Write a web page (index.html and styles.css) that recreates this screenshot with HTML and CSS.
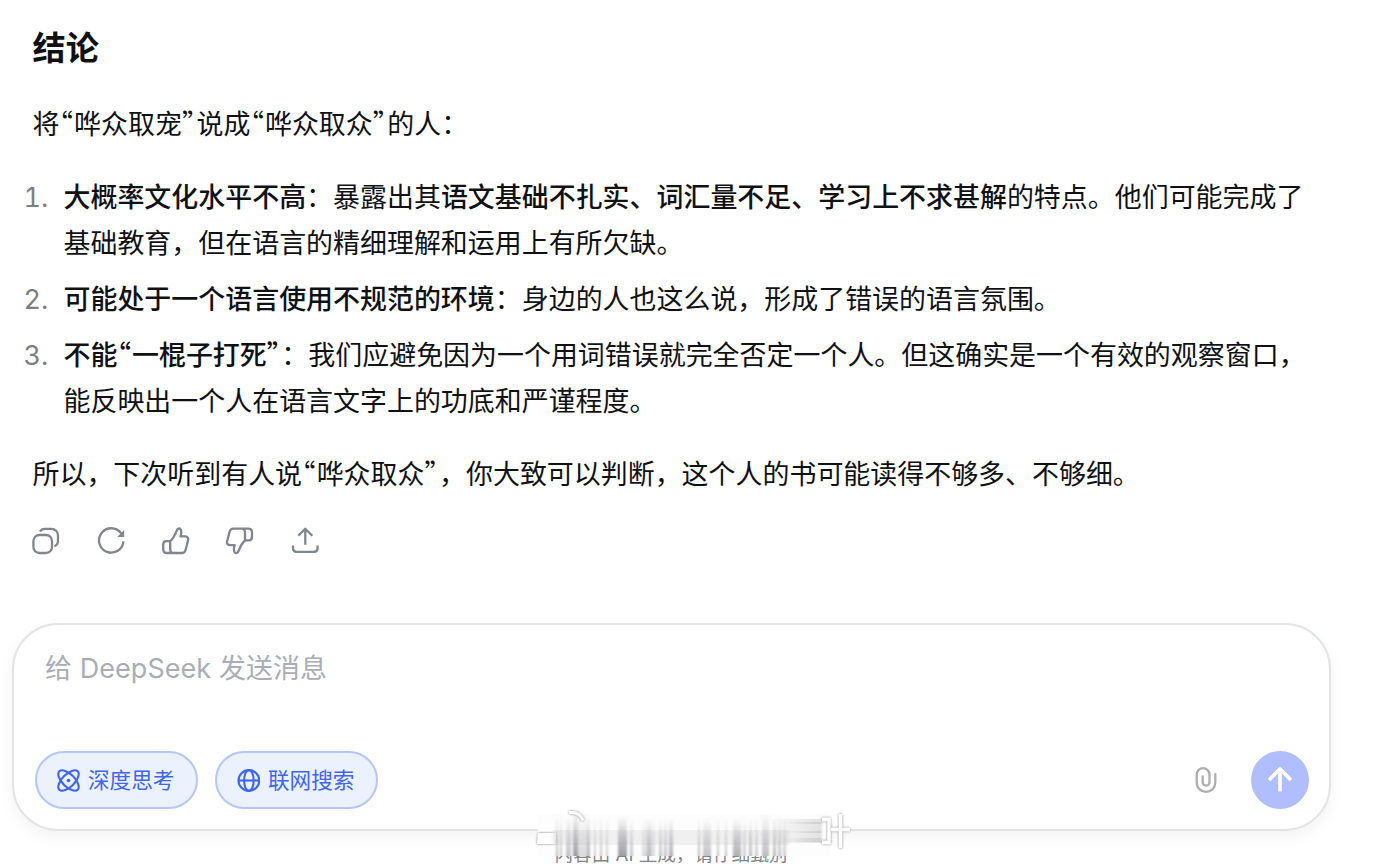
FILE: index.html
```html
<!DOCTYPE html>
<html lang="zh-CN">
<head>
  <meta charset="UTF-8">
  <meta name="viewport" content="width=device-width, initial-scale=1.0">
  <title>DeepSeek</title>
  <link rel="stylesheet" href="styles.css">
</head>
<body>
  <main class="answer">
    <h3>结论</h3>
    <p>将<span class="q">“</span>哗众取宠<span class="q">”</span>说成<span class="q">“</span>哗众取众<span class="q">”</span>的人：</p>
    <ol>
      <li><span class="num">1.</span><div><strong>大概率文化水平不高</strong>：暴露出其<strong>语文基础不扎实、词汇量不足、学习上不求甚解</strong>的特点。他们可能完成了<br>基础教育，但在语言的精细理解和运用上有所欠缺。</div></li>
      <li><span class="num">2.</span><div><strong>可能处于一个语言使用不规范的环境</strong>：身边的人也这么说，形成了错误的语言氛围。</div></li>
      <li><span class="num">3.</span><div><strong>不能<span class="q">“</span>一棍子打死<span class="q">”</span></strong>：我们应避免因为一个用词错误就完全否定一个人。但这确实是一个有效的观察窗口，<br>能反映出一个人在语言文字上的功底和严谨程度。</div></li>
    </ol>
    <p>所以，下次听到有人说<span class="q">“</span>哗众取众<span class="q">”</span>，你大致可以判断，这个人的书可能读得不够多、不够细。</p>
    <div class="actions">
      <svg viewBox="0 0 28 28"><rect x="1.4" y="8" width="18.6" height="18" rx="6"/><path d="M8 4.6C9 2.5 10.8 1.8 13 1.8h6.5A6.5 6.5 0 0 1 26 8.3v5.2c0 3-1.4 5-3.7 5.6"/></svg>
      <svg viewBox="0 0 28 28"><path d="M26.4 14.3A12.2 12.2 0 1 1 24.2 6.4"/><path class="solid" d="M27.200 3v7h-7z"/></svg>
      <svg viewBox="0 0 28 28"><path d="M4.2 14.2h3.6c3.6-1.8 5-6.8 7-10.8.8-2 2.8-2.4 3.7-1.2 1.2 1.8.8 4.8 0 7.2h4.6c2.6 0 3.6 1.8 3 4l-2.6 9.8c-.5 1.8-1.8 2.8-3.6 2.8H5c-2.5 0-3.8-1.4-3.8-3.8V18c0-2.3 1-3.8 3-3.8zM8.2 14.5V22c0 2.4 1 4 3.4 4"/></svg>
      <svg viewBox="0 0 28 28"><path transform="rotate(180 13.6 13.8)" d="M4.2 14.2h3.6c3.6-1.8 5-6.8 7-10.8.8-2 2.8-2.4 3.7-1.2 1.2 1.8.8 4.8 0 7.2h4.6c2.6 0 3.6 1.8 3 4l-2.6 9.8c-.5 1.8-1.8 2.8-3.6 2.8H5c-2.5 0-3.8-1.4-3.8-3.8V18c0-2.3 1-3.8 3-3.8zM8.2 14.5V22c0 2.4 1 4 3.4 4"/></svg>
      <svg viewBox="0 0 28 28"><path d="M14.300 17.800V2M7.300 8.800l7-7 7 7M2 18.600v2.600c0 2.400 1.200 3.600 3.600 3.600h17.400c2.400 0 3.600-1.200 3.600-3.600v-2.600"/></svg>
    </div>
  </main>

  <section class="composer">
    <div class="placeholder">给 DeepSeek 发送消息</div>
    <div class="toolbar">
      <button class="chip">
        <svg viewBox="0 0 23 23"><ellipse cx="11.5" cy="11.5" rx="13" ry="6.2" transform="rotate(45 11.5 11.5)"/><ellipse cx="11.5" cy="11.5" rx="13" ry="6.2" transform="rotate(-45 11.5 11.5)"/><circle class="dot" cx="11.5" cy="11.5" r="1.8"/></svg>
        <span>深度思考</span>
      </button>
      <button class="chip">
        <svg viewBox="0 0 23 23"><circle cx="11.9" cy="11.5" r="10.4"/><ellipse cx="11.9" cy="11.5" rx="4.8" ry="10.4"/><path d="M1.400 11.5h21"/></svg>
        <span>联网搜索</span>
      </button>
      <svg class="clip" viewBox="0 0 22 26"><path d="M20.3 6.2v9.300a9.300 9.300 0 0 1-18.600 0V7.600a6.400 6.400 0 0 1 12.800 0v7.700a3.400 3.400 0 0 1-6.800 0V8.400"/></svg>
      <button class="send"><svg viewBox="0 0 26 26"><path d="M13 24.5V2M2 13 13 2l11 11"/></svg></button>
    </div>
  </section>

  <footer>内容由 AI 生成，请仔细甄别</footer>

  <!-- streaks over the footer line -->
  <svg class="streaks" viewBox="0 0 350 68">
    <defs>
      <linearGradient id="fade" x1="0" y1="0" x2="0" y2="1">
        <stop offset="0" stop-color="#84848a" stop-opacity="0"/>
        <stop offset=".5" stop-color="#84848a" stop-opacity=".4"/>
        <stop offset="1" stop-color="#84848a" stop-opacity=".8"/>
      </linearGradient>
      <linearGradient id="side" x1="0" y1="0" x2="1" y2="0">
        <stop offset="0" stop-color="#999" stop-opacity="0"/>
        <stop offset="1" stop-color="#999" stop-opacity=".28"/>
      </linearGradient>
      <filter id="soft"><feGaussianBlur stdDeviation=".8 .4"/></filter>
      <filter id="shade" x="-20%" y="-20%" width="140%" height="140%"><feDropShadow dx="0" dy="0" stdDeviation="1.1" flood-color="#555" flood-opacity=".85"/></filter>
    </defs>
    <rect x="18" y="14" width="292" height="42" fill="#fdfdfd"/>
    <g filter="url(#shade)">
      <path d="M18 33h18v11H17z" fill="#fff"/>
      <path d="M49 12.5q11-1 14 8" fill="none" stroke="#fff" stroke-width="3"/>
    </g>
    <rect x="32" y="30" width="238" height="15" fill="#e8e8e8" opacity=".6" filter="url(#soft)"/>
    <g fill="url(#fade)" filter="url(#soft)">
      <rect x="36" y="14" width="2" height="42" opacity=".7"/>
      <rect x="40" y="14" width="2" height="42" opacity=".6"/>
      <rect x="46" y="16" width="5" height="40" opacity=".6"/>
      <rect x="53" y="12" width="5" height="44"/>
      <rect x="58" y="14" width="10" height="42" opacity=".35"/>
      <rect x="67" y="16" width="3" height="40" opacity=".7"/>
      <rect x="74" y="16" width="2" height="40" opacity=".5"/>
      <rect x="80" y="16" width="2" height="40" opacity=".6"/>
      <rect x="86" y="16" width="2" height="40" opacity=".5"/>
      <rect x="98" y="16" width="9" height="40"/>
      <rect x="110" y="18" width="3" height="38" opacity=".6"/>
      <rect x="122" y="18" width="13" height="38" opacity=".35"/>
      <rect x="127" y="18" width="4" height="38" opacity=".5"/>
      <rect x="139" y="18" width="3" height="38" opacity=".6"/>
      <rect x="144" y="18" width="3" height="38" opacity=".6"/>
      <rect x="149" y="18" width="4" height="38" opacity=".8"/>
      <rect x="178" y="18" width="2" height="38" opacity=".7"/>
      <rect x="183" y="18" width="8" height="38" opacity=".6"/>
      <rect x="197" y="18" width="2" height="38" opacity=".6"/>
      <rect x="205" y="18" width="2" height="38" opacity=".6"/>
      <rect x="213" y="18" width="8" height="38" opacity=".8"/>
      <rect x="223" y="18" width="3" height="38" opacity=".5"/>
      <rect x="229" y="18" width="3" height="38" opacity=".7"/>
      <rect x="235" y="18" width="3" height="38" opacity=".5"/>
      <rect x="242" y="14" width="7" height="42" opacity=".65"/>
      <rect x="253" y="18" width="3" height="38" opacity=".7"/>
      <rect x="258" y="18" width="3" height="38" opacity=".6"/>
      <rect x="263" y="18" width="3" height="38" opacity=".5"/>
    </g>
    <g fill="url(#side)" filter="url(#soft)">
      <rect x="248" y="19" width="54" height="24"/>
      <rect x="262" y="22" width="40" height="2"/>
      <rect x="262" y="31" width="40" height="2"/>
      <rect x="262" y="38" width="40" height="4"/>
    </g>
    <g fill="none" stroke="#fff" stroke-width="3.4" filter="url(#shade)">
      <path d="M302 19.500h7v23h-7M311 29.500h19M320.500 14v34"/>
    </g>
  </svg>
</body>
</html>
```
FILE: styles.css
```css
* {
  box-sizing: border-box;
}
body {
  margin: 0;
  height: 868px;
  overflow: hidden;
  position: relative;
  background: #fff;
  color: #0f1115;
  font-family: Inter, "Noto Sans CJK SC", sans-serif;
  font-size: 26.96px;
  line-height: 46px;
}
.answer {
  height: 624px;
  padding: 25px 0 0 32.5px;
  white-space: nowrap;
}
h3 {
  margin: 0 0 31px;
  font-size: 33.2px;
  line-height: 46px;
  font-weight: 700;
}
p {
  margin: 0 0 27px;
}
ol {
  list-style: none;
  margin: 0 0 27px -9px;
  padding: 0;
  display: flex;
  flex-direction: column;
  gap: 10px;
}
li {
  display: flex;
}
.num {
  width: 40px;
  color: #7d7f83;
  font-variant-numeric: tabular-nums;
}
/* half-width curly quotes */
.q {
  font-family: "Noto Sans CJK SC", sans-serif;
  font-feature-settings: "halt";
  letter-spacing: 1.1px;
  line-height: 0;
}
strong {
  font-weight: 500;
}
.actions {
  display: flex;
  gap: 36.8px;
  margin: 29px 0 0 -0.5px;
}
.actions svg {
  width: 28px;
  height: 28px;
  fill: none;
  stroke: #81858c;
  stroke-width: 2.3;
  stroke-linejoin: round;
  overflow: visible;
}
.actions .solid {
  fill: #81858c;
  stroke: none;
}
.composer {
  width: 1319px;
  height: 208px;
  margin-left: 12px;
  margin-top: -1px;
  padding: 21px 20px 20px 21px;
  border: 2px solid #e3e4e6;
  border-radius: 46px;
  box-shadow: 0 6px 16px rgba(0, 0, 0, 0.05);
  display: flex;
  flex-direction: column;
  justify-content: space-between;
}
.placeholder {
  padding-left: 10px;
  color: #a9adb5;
  letter-spacing: 0.08px;
}
.toolbar {
  display: flex;
  align-items: center;
  height: 58px;
}
.chip {
  width: 163px;
  height: 58px;
  margin: 0 17px 0 0;
  padding: 0 0 0 20px;
  display: flex;
  align-items: center;
  gap: 8px;
  border: 2px solid #b7c6f6;
  border-radius: 29px;
  background: #ebf2fd;
  color: #3f64f0;
  font-family: inherit;
  font-size: 21.6px;
  line-height: 32px;
  white-space: nowrap;
}
.chip svg {
  width: 23px;
  height: 23px;
  flex: none;
  fill: none;
  stroke: #3f64f0;
  stroke-width: 2.1;
}
.chip .dot {
  fill: #3f64f0;
  stroke: none;
}
.clip {
  width: 22px;
  height: 26px;
  margin-left: auto;
  margin-right: 34px;
  fill: none;
  stroke: #aeaeb0;
  stroke-width: 2.3;
}
.send {
  width: 58px;
  height: 58px;
  padding: 0;
  border: none;
  border-radius: 50%;
  background: #b0bdff;
  display: flex;
  align-items: center;
  justify-content: center;
}
.send svg {
  width: 26px;
  height: 26px;
  fill: none;
  stroke: #fff;
  stroke-width: 3.6;
}
footer {
  margin-top: 7px;
  width: 1342px;
  text-align: center;
  font-size: 18.6px;
  line-height: 32px;
  color: #81858c;
}
.streaks {
  position: absolute;
  left: 520px;
  top: 800px;
  width: 350px;
  height: 68px;
}
```
